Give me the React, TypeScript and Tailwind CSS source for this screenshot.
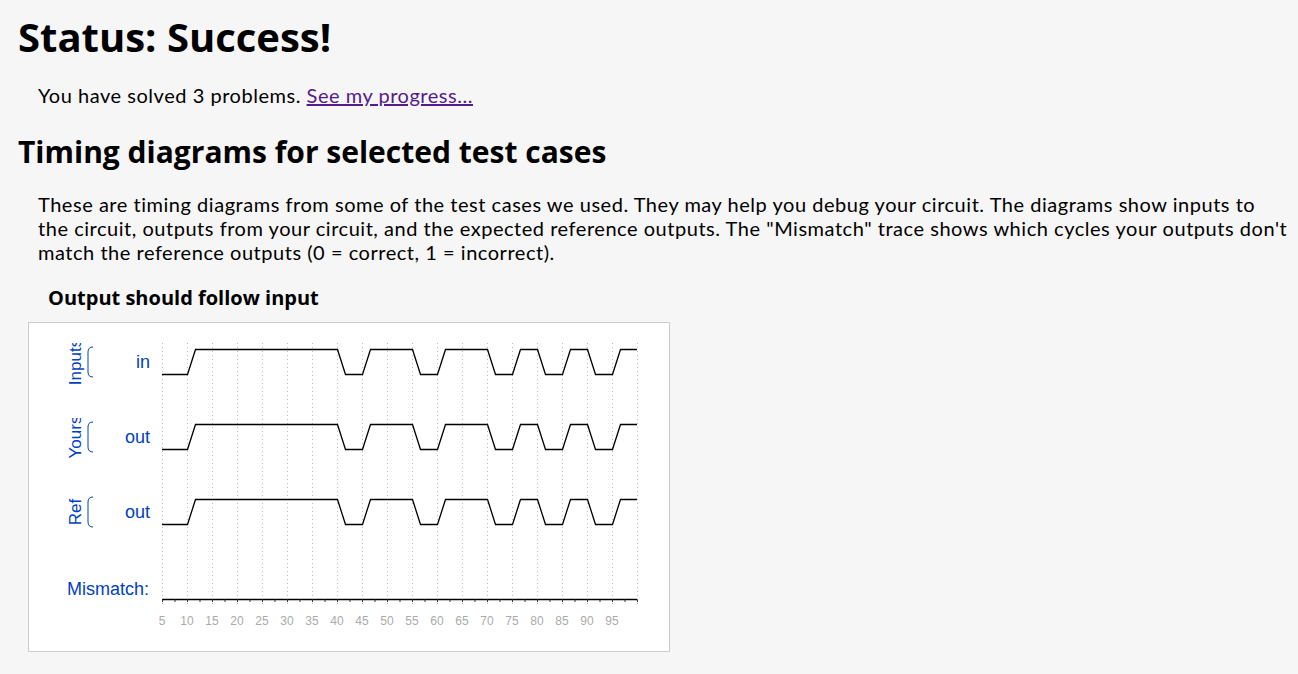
const BLUE = "#0041c4";

// times at which the square wave toggles (starts low at t=5, ends at t=100)
const EDGES = [10, 40, 45, 55, 60, 70, 75, 80, 85, 90, 95];

const xOf = (t: number) => 137 + 5 * t;

function wavePath(high: number, low: number) {
    let level = low;
    let d = `M${xOf(5)},${level}`;
    for (const t of EDGES) {
        const x = xOf(t) + 0.5;
        const next = level === low ? high : low;
        d += ` L${x},${level} L${x + 8},${next}`;
        level = next;
    }
    d += ` L${xOf(100)},${level}`;
    return d;
}

function Bracket({ top }: { top: number }) {
    return (
        <path
            d={`M93,${top} q-5,0 -5,5 v20 q0,5 5,5`}
            fill="none"
            stroke={BLUE}
            strokeWidth={1}
        />
    );
}

function TimingDiagram() {
    const grid = Array.from({ length: 20 }, (_, i) => 162.5 + i * 25);
    const ticks = Array.from({ length: 39 }, (_, i) => 162 + i * 12.5);
    const labels = Array.from({ length: 19 }, (_, i) => 5 + i * 5);
    const rows = [
        { name: "in", group: "Inputs", high: 349.5, low: 374.5 },
        { name: "out", group: "Yours", high: 424.5, low: 449.5 },
        { name: "out", group: "Ref", high: 499.5, low: 524.5 },
    ];

    return (
        <svg width={640} height={328} viewBox="29 323 640 328" className="block">
            <defs>
                <clipPath id="groupclip">
                    <rect x={40} y={343} width={60} height={300} />
                </clipPath>
            </defs>

            {grid.map((x) => (
                <line key={x} x1={x} y1={343} x2={x} y2={606} stroke="#bbb" strokeWidth={1} strokeDasharray="1,3" />
            ))}

            {rows.map((r) => {
                const mid = (r.high + r.low) / 2;
                return (
                    <g key={r.group}>
                        <text
                            x={81}
                            y={mid}
                            transform={`rotate(-90 81 ${mid})`}
                            textAnchor="middle"
                            fontFamily="'Liberation Sans', Arial, sans-serif"
                            fontSize={17}
                            fill={BLUE}
                            clipPath="url(#groupclip)"
                        >
                            {r.group}
                        </text>
                        <Bracket top={r.high - 2.5} />
                        <text
                            x={150}
                            y={mid + 6}
                            textAnchor="end"
                            fontFamily="'Liberation Sans', Arial, sans-serif"
                            fontSize={18}
                            fill={BLUE}
                        >
                            {r.name}
                        </text>
                        <path d={wavePath(r.high, r.low)} fill="none" stroke="#000" strokeWidth={1.3} />
                    </g>
                );
            })}

            <text
                x={149}
                y={595}
                textAnchor="end"
                fontFamily="'Liberation Sans', Arial, sans-serif"
                fontSize={18}
                fill={BLUE}
            >
                Mismatch:
            </text>
            <line x1={162} y1={599.5} x2={637} y2={599.5} stroke="#000" strokeWidth={1.3} />
            {ticks.map((x) => (
                <line key={x} x1={x + 0.5} y1={599.5} x2={x + 0.5} y2={602} stroke="#333" strokeWidth={1} />
            ))}

            {labels.map((n) => (
                <text
                    key={n}
                    x={xOf(n)}
                    y={625}
                    textAnchor="middle"
                    fontFamily="'Liberation Sans', Arial, sans-serif"
                    fontSize={12}
                    fill="#aaa"
                >
                    {n}
                </text>
            ))}
        </svg>
    );
}

export default function App() {
    return (
        <div className="min-h-screen bg-[#f6f6f6] px-[18px] pt-[13px] text-black font-['Lato',sans-serif]">
            <h1 className="font-['Open_Sans',sans-serif] font-bold text-[40px] leading-[48px]">
                Status: Success!
            </h1>

            <p className="mt-[22px] ml-[20px] text-[20px] leading-[24px] tracking-[0.53px]">
                You have solved 3 problems.{" "}
                <a href="#" className="underline text-[#551a8b]">
                    See my progress...
                </a>
            </p>

            <h2 className="mt-[27px] font-['Open_Sans',sans-serif] font-bold text-[30px] leading-[36px]">
                Timing diagrams for selected test cases
            </h2>

            <p className="mt-[22px] ml-[20px] text-[20px] leading-[24px] tracking-[0.53px] whitespace-nowrap">
                These are timing diagrams from some of the test cases we used. They may help you debug your circuit. The diagrams show inputs to
                <br />
                the circuit, outputs from your circuit, and the expected reference outputs. The "Mismatch" trace shows which cycles your outputs don't
                <br />
                match the reference outputs (0 = correct, 1 = incorrect).
            </p>

            <h3 className="mt-[22px] ml-[30px] font-['Open_Sans',sans-serif] font-bold text-[20px] leading-[24px]">
                Output should follow input
            </h3>

            <div className="mt-[12px] ml-[10px] w-[642px] h-[330px] border border-[#ccc] bg-white">
                <TimingDiagram />
            </div>
        </div>
    );
}
